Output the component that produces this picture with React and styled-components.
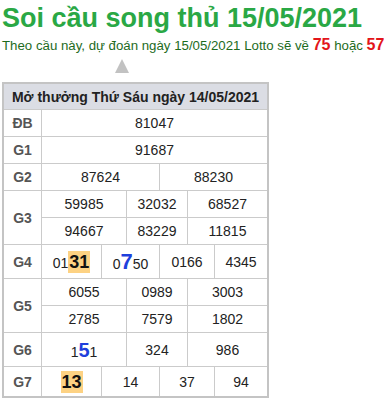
import React from 'react';
import styled, { createGlobalStyle } from 'styled-components';

const GlobalStyle = createGlobalStyle`
  body {
    margin: 0;
    background: #fff;
    font-family: "Liberation Sans", Arial, sans-serif;
    overflow: hidden;
  }
`;

const Page = styled.div`
  padding: 3px 0 0 2px;
  width: 384px;
  box-sizing: border-box;
`;

const Title = styled.h1`
  margin: 0;
  font-size: 27px;
  line-height: 31px;
  font-weight: bold;
  color: #2aa845;
  white-space: nowrap;
`;

const Subtitle = styled.p`
  margin: 3px 0 0;
  font-size: 13.25px;
  line-height: 15px;
  color: #1d6b1d;
  white-space: nowrap;

  b {
    color: #e3151a;
    font-size: 16px;
  }
`;

const Pointer = styled.div`
  width: 0;
  height: 0;
  margin: 6px 0 0 113px;
  border-left: 7.5px solid transparent;
  border-right: 7.5px solid transparent;
  border-bottom: 14px solid #c2c2c2;
`;

const Board = styled.div`
  display: grid;
  grid-template-columns: 37px 59px 24px 32px 27px 26px 52px;
  grid-template-rows: 25px 26px 26px 26px 26px 26px 33px 26px 26px 33px 29px;
  gap: 1px;
  width: max-content;
  margin-top: 9px;
  background: #cbcbcb;
  border: 2px solid #c4c4c4;
  color: #222;
  font-size: 14px;
`;

const Head = styled.div`
  grid-column: 1 / -1;
  display: flex;
  align-items: center;
  justify-content: center;
  background: #dbdde4;
  font-weight: bold;
  color: #222;
  white-space: nowrap;
`;

const Label = styled.div`
  grid-row: span ${(p) => p.$rows || 1};
  display: flex;
  align-items: center;
  justify-content: center;
  background: #fff;
  font-weight: bold;
  color: #555;
`;

const Cell = styled.div`
  grid-column: span ${(p) => p.$span || 1};
  display: flex;
  align-items: center;
  justify-content: center;
  background: #fff;
  white-space: nowrap;
`;

const Hit = styled.span`
  display: inline-block;
  width: 22px;
  height: 22px;
  line-height: 22px;
  text-align: center;
  background: #fdd283;
  font-size: 18px;
  font-weight: bold;
  color: #111;
`;

const Big = styled.span`
  font-size: ${(p) => p.$size}px;
  line-height: ${(p) => p.$size}px;
  font-weight: bold;
  color: #1e3fdc;
`;

const rows = [
  ['ĐB', [['81047', 6]]],
  ['G1', [['91687', 6]]],
  ['G2', [['87624', 3], ['88230', 3]]],
];

const App = () => {
  return (
    <Page>
      <GlobalStyle />
      <Title>Soi cầu song thủ 15/05/2021</Title>
      <Subtitle>
        Theo cầu này, dự đoán ngày 15/05/2021 Lotto sẽ về <b>75</b> hoặc <b>57</b>
      </Subtitle>
      <Pointer />
      <Board>
        <Head>Mở thưởng Thứ Sáu ngày 14/05/2021</Head>
        {rows.map(([label, cells]) => (
          <React.Fragment key={label}>
            <Label>{label}</Label>
            {cells.map(([n, span]) => (
              <Cell key={n} $span={span}>{n}</Cell>
            ))}
          </React.Fragment>
        ))}

        <Label $rows={2}>G3</Label>
        <Cell $span={2}>59985</Cell>
        <Cell $span={2}>32032</Cell>
        <Cell $span={2}>68527</Cell>
        <Cell $span={2}>94667</Cell>
        <Cell $span={2}>83229</Cell>
        <Cell $span={2}>11815</Cell>

        <Label>G4</Label>
        <Cell><span>01<Hit>31</Hit></span></Cell>
        <Cell $span={2}><span>0<Big $size={22}>7</Big>50</span></Cell>
        <Cell $span={2}>0166</Cell>
        <Cell>4345</Cell>

        <Label $rows={2}>G5</Label>
        <Cell $span={2}>6055</Cell>
        <Cell $span={2}>0989</Cell>
        <Cell $span={2}>3003</Cell>
        <Cell $span={2}>2785</Cell>
        <Cell $span={2}>7579</Cell>
        <Cell $span={2}>1802</Cell>

        <Label>G6</Label>
        <Cell $span={2}><span>1<Big $size={20}>5</Big>1</span></Cell>
        <Cell $span={2}>324</Cell>
        <Cell $span={2}>986</Cell>

        <Label>G7</Label>
        <Cell><Hit>13</Hit></Cell>
        <Cell $span={2}>14</Cell>
        <Cell $span={2}>37</Cell>
        <Cell>94</Cell>
      </Board>
    </Page>
  );
};

export default App;
